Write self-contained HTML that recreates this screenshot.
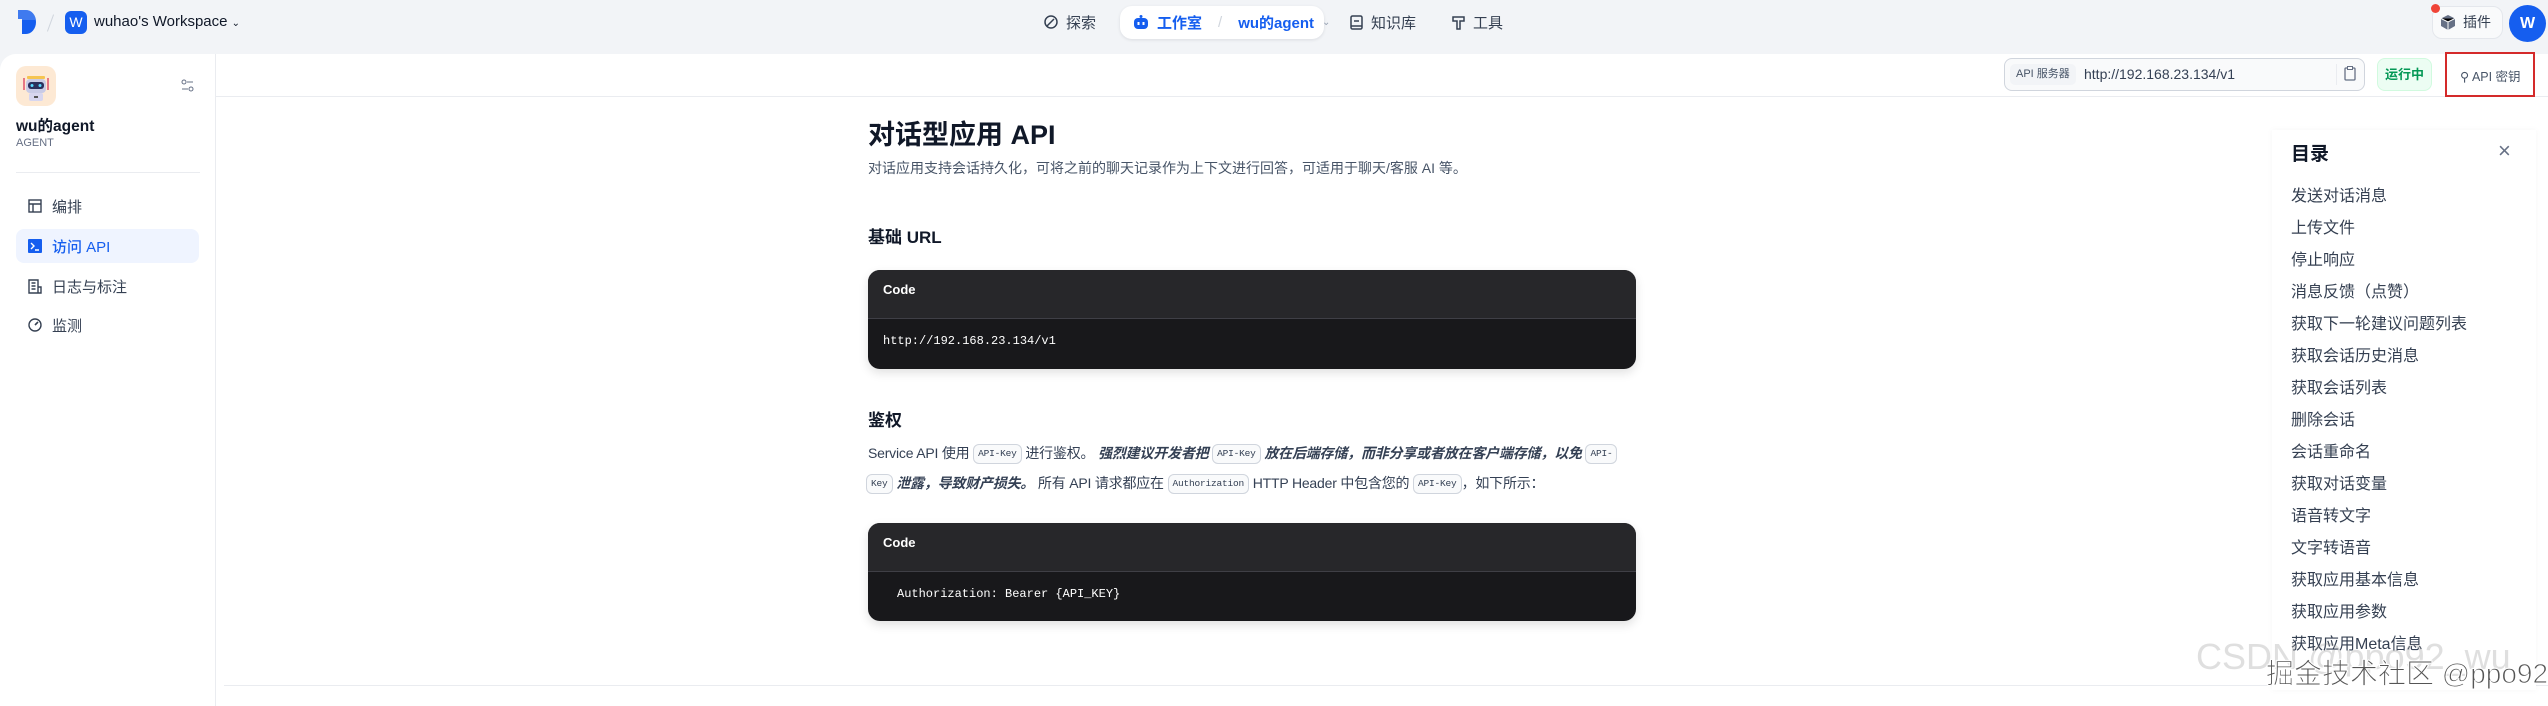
<!DOCTYPE html>
<html><head><meta charset="utf-8">
<style>
*{box-sizing:border-box;margin:0;padding:0}
body{width:2548px;height:706px;overflow:hidden;background:#f2f4f7;font-family:"Liberation Sans","Noto Sans CJK SC",sans-serif;color:#101828;position:relative}
.abs{position:absolute}
.top{position:absolute;left:0;top:0;width:2548px;height:54px}
.navi{position:absolute;top:6px;height:32px;display:flex;align-items:center;font-size:15px;color:#354052;gap:8px}
.panel{position:absolute;left:0;top:54px;width:2548px;height:652px;background:#fff;border-radius:16px 0 0 0}
.side{position:absolute;left:0;top:54px;width:216px;height:652px;border-right:1px solid #eaecf0}
.menu{position:absolute;left:16px;width:183px;height:34px;display:flex;align-items:center;padding-left:12px;gap:10px;font-size:15px;color:#354052;border-radius:8px}
.code{position:absolute;left:868px;width:768px;background:#18181b;border-radius:12px;box-shadow:0 4px 10px rgba(0,0,0,.12);overflow:hidden}
.code .h{height:49px;background:#27272a;border-bottom:1px solid #3f3f46;color:#fff;font-weight:bold;font-size:13px;padding:12px 15px}
.code .b{color:#fff;font-family:"Liberation Mono",monospace;font-size:12px}
.ic{display:inline-block;font-family:"Liberation Mono",monospace;font-size:9.5px;border:1px solid #d0d5dd;border-radius:6px;padding:2px 4px;background:#f9fafb;color:#344054;line-height:14px;vertical-align:middle;font-style:normal;font-weight:normal}
.p{position:absolute;left:868px;font-size:14px;line-height:30px;color:#344054;white-space:nowrap}
.toc{position:absolute;left:2272px;top:130px;width:264px;height:560px;background:#fff;box-shadow:0 0 6px rgba(0,0,0,.04)}
.toc div{position:absolute;left:19px;font-size:16px;color:#354052;white-space:nowrap}
</style></head><body>
<div class="top">
  <svg class="abs" style="left:18px;top:10px" width="18" height="24" viewBox="0 0 18 24"><path d="M0 0h8a10 12 0 0 1 0 24H4V9H0z" fill="#155eef"/><path d="M0 0h8a10 12 0 0 1 10 10H4V9H0z" fill="#5b8def" opacity=".6"/></svg>
  <div class="abs" style="left:50px;top:14px;width:1px;height:18px;background:#d0d5dd;transform:rotate(20deg)"></div>
  <div class="abs" style="left:65px;top:11px;width:22px;height:23px;border-radius:6px;background:#155eef;color:#fff;font-size:14px;text-align:center;line-height:23px">W</div>
  <div class="abs" style="left:94px;top:13px;font-size:15px;color:#101828">wuhao's Workspace <span style="font-size:10px">&#8964;</span></div>
  <div class="navi" style="left:1044px"><svg width="14" height="14" viewBox="0 0 14 14"><circle cx="7" cy="7" r="6" fill="none" stroke="#354052" stroke-width="1.5"/><path d="M3 11L10 4" stroke="#354052" stroke-width="1.5"/></svg>探索</div>
  <div class="abs" style="left:1120px;top:6px;width:204px;height:33px;background:#fff;border-radius:12px;box-shadow:0 1px 3px rgba(16,24,40,.1)"></div>
  <div class="navi" style="left:1133px;color:#155eef;font-weight:bold"><svg width="16" height="14" viewBox="0 0 16 14"><rect x="1" y="3" width="14" height="11" rx="4" fill="#155eef"/><circle cx="8" cy="1.5" r="1.5" fill="#155eef"/><rect x="4.5" y="7" width="2" height="3" fill="#fff"/><rect x="9.5" y="7" width="2" height="3" fill="#fff"/></svg>工作室 <span style="color:#d0d5dd;font-weight:normal;margin:0 8px">/</span> wu的agent <span style="color:#98a2b3;font-size:10px;font-weight:normal">&#8964;</span></div>
  <div class="navi" style="left:1350px"><svg width="13" height="15" viewBox="0 0 13 15"><rect x="1" y="1" width="11" height="13" rx="1.5" fill="none" stroke="#354052" stroke-width="1.5"/><path d="M4 6h5M1 11h11" stroke="#354052" stroke-width="1.5"/></svg>知识库</div>
  <div class="navi" style="left:1452px"><svg width="13" height="15" viewBox="0 0 13 15"><path d="M1 2h11v4H8v8H5V6H1z" fill="none" stroke="#354052" stroke-width="1.5"/></svg>工具</div>
  <div class="abs" style="left:2432px;top:6px;width:71px;height:33px;border:1px solid #e4e7ec;border-radius:10px;background:#f9fafb;font-size:14px;color:#354052;line-height:31px;padding-left:30px">插件</div>
  <svg class="abs" style="left:2441px;top:15px" width="14" height="15" viewBox="0 0 14 15"><path d="M7 0L14 3.5V11L7 15L0 11V3.5z" fill="#667085"/><path d="M0 3.5L7 7L14 3.5M7 7V15" stroke="#fff" stroke-width="1"/></svg>
  <div class="abs" style="left:2431px;top:4px;width:9px;height:9px;border-radius:50%;background:#f04438"></div>
  <div class="abs" style="left:2509px;top:5px;width:37px;height:37px;border-radius:50%;background:#155eef;color:#fff;font-weight:bold;font-size:16px;text-align:center;line-height:37px">W</div>
</div>
<div class="panel"></div>
<div class="side">
  <div class="abs" style="left:16px;top:12px;width:40px;height:40px;border-radius:10px;background:#fde9d4"></div>
  <svg class="abs" style="left:22px;top:18px" width="28" height="30" viewBox="0 0 28 30"><rect x="5" y="4" width="18" height="3" rx="1" fill="#f5c451"/><rect x="4" y="7" width="20" height="14" rx="4" fill="#c9cbe6"/><rect x="6" y="10" width="16" height="7" rx="3" fill="#2b2f5c"/><circle cx="10" cy="13.5" r="1.5" fill="#5ad8ff"/><circle cx="18" cy="13.5" r="1.5" fill="#5ad8ff"/><rect x="7" y="21" width="14" height="8" rx="2" fill="#d7d6ef"/><rect x="12" y="24" width="4" height="2" fill="#555"/><path d="M2 6v12M26 6v12" stroke="#e0536b" stroke-width="1.5"/></svg>
  <svg class="abs" style="left:181px;top:25px" width="13" height="13" viewBox="0 0 13 13"><circle cx="3" cy="3" r="2" fill="none" stroke="#667085"/><path d="M6 3h6M1 10h6" stroke="#667085"/><circle cx="10" cy="10" r="2" fill="none" stroke="#667085"/></svg>
  <div class="abs" style="left:16px;top:60px;font-size:15.5px;font-weight:bold">wu的agent</div>
  <div class="abs" style="left:16px;top:83px;font-size:11px;color:#667085">AGENT</div>
  <div class="abs" style="left:16px;top:118px;width:184px;height:1px;background:#eaecf0"></div>
  <div class="menu" style="top:135px"><svg width="14" height="14" viewBox="0 0 14 14"><rect x="1" y="1" width="12" height="12" fill="none" stroke="#354052" stroke-width="1.4"/><path d="M1 5h12M5 5v8" stroke="#354052" stroke-width="1.4"/></svg>编排</div>
  <div class="menu" style="top:175px;background:#eff4ff;color:#155eef;font-weight:500"><svg width="14" height="14" viewBox="0 0 14 14"><rect width="14" height="14" rx="1" fill="#155eef"/><path d="M3 4l3 3-3 3M7 11h4" stroke="#fff" stroke-width="1.4" fill="none"/></svg>访问 API</div>
  <div class="menu" style="top:215px"><svg width="14" height="15" viewBox="0 0 14 15"><path d="M1 1h9v13H1zM10 8h3v6h-3M3.5 4h4M3.5 7h4M3.5 10h4" fill="none" stroke="#354052" stroke-width="1.4"/></svg>日志与标注</div>
  <div class="menu" style="top:254px"><svg width="14" height="14" viewBox="0 0 14 14"><circle cx="7" cy="7" r="6" fill="none" stroke="#354052" stroke-width="1.4"/><path d="M7 7l3-3" stroke="#354052" stroke-width="1.6"/></svg>监测</div>
</div>
<div class="abs" style="left:216px;top:96px;width:2332px;height:1px;background:#eaecf0"></div>
<div class="abs" style="left:2004px;top:58px;width:361px;height:33px;border:1px solid #d0d5dd;border-radius:8px;background:#f9fafb"></div>
<div class="abs" style="left:2010px;top:64px;height:21px;background:#f2f4f7;border-radius:5px;padding:0 6px;font-size:11px;color:#475467;line-height:21px">API 服务器</div>
<div class="abs" style="left:2084px;top:64px;font-size:14px;color:#344054;line-height:21px">http://192.168.23.134/v1</div>
<div class="abs" style="left:2336px;top:64px;width:1px;height:21px;background:#eaecf0"></div>
<svg class="abs" style="left:2344px;top:66px" width="12" height="15" viewBox="0 0 12 15"><rect x="1" y="2" width="10" height="12" rx="1" fill="none" stroke="#667085" stroke-width="1.3"/><rect x="3.5" y="0.5" width="5" height="3" fill="#fff" stroke="#667085"/></svg>
<div class="abs" style="left:2377px;top:58px;width:55px;height:33px;border-radius:8px;background:#ecfdf3;border:1px solid #d1fadf;color:#039855;font-size:13px;font-weight:bold;text-align:center;line-height:31px">运行中</div>
<div class="abs" style="left:2445px;top:52px;width:90px;height:45px;border:2.5px solid #d42a2a"></div>
<div class="abs" style="left:2460px;top:66px;font-size:12.5px;color:#475467">&#9906; API 密钥</div>

<div class="abs" style="left:868px;top:113px;font-size:27px;font-weight:bold;color:#101828">对话型应用 API</div>
<div class="abs" style="left:868px;top:158px;font-size:14px;color:#475467">对话应用支持会话持久化，可将之前的聊天记录作为上下文进行回答，可适用于聊天/客服 AI 等。</div>
<div class="abs" style="left:868px;top:223px;font-size:17px;font-weight:bold">基础 URL</div>
<div class="code" style="top:270px;height:99px"><div class="h">Code</div><div class="b" style="padding:15px 15px">http://192.168.23.134/v1</div></div>
<div class="abs" style="left:868px;top:406px;font-size:17px;font-weight:bold">鉴权</div>
<div class="p" style="top:438px;letter-spacing:-0.2px">Service API 使用 <span class="ic">API-Key</span> 进行鉴权。 <b><i>强烈建议开发者把 <span class="ic">API-Key</span> 放在后端存储，而非分享或者放在客户端存储，以免 <span class="ic">API-</span></i></b></div>
<div class="p" style="top:468px;left:866px;letter-spacing:-0.2px"><span class="ic">Key</span> <b><i>泄露，导致财产损失。</i></b> 所有 API 请求都应在 <span class="ic">Authorization</span> HTTP Header 中包含您的 <span class="ic">API-Key</span>，如下所示：</div>
<div class="code" style="top:523px;height:98px"><div class="h">Code</div><div class="b" style="padding:15px 29px">Authorization: Bearer {API_KEY}</div></div>
<div class="abs" style="left:224px;top:685px;width:2324px;height:1px;background:#eaecf0"></div>

<div class="toc">
  <div style="top:9px;font-size:19px;font-weight:bold;color:#101828">目录</div>
  <div style="top:8px;left:226px;font-size:22px;color:#667085">×</div>
  <div style="top:52px">发送对话消息</div>
  <div style="top:84px">上传文件</div>
  <div style="top:116px">停止响应</div>
  <div style="top:148px">消息反馈（点赞）</div>
  <div style="top:180px">获取下一轮建议问题列表</div>
  <div style="top:212px">获取会话历史消息</div>
  <div style="top:244px">获取会话列表</div>
  <div style="top:276px">删除会话</div>
  <div style="top:308px">会话重命名</div>
  <div style="top:340px">获取对话变量</div>
  <div style="top:372px">语音转文字</div>
  <div style="top:404px">文字转语音</div>
  <div style="top:436px">获取应用基本信息</div>
  <div style="top:468px">获取应用参数</div>
  <div style="top:500px">获取应用Meta信息</div>
</div>
<div class="abs" style="left:2196px;top:636px;font-size:36px;color:rgba(150,150,150,.3);white-space:nowrap">CSDN @ppo92_wu</div>
<div class="abs" style="left:2266px;top:652px;font-size:28px;color:#555;white-space:nowrap;-webkit-text-stroke:1px #fff;text-shadow:0 0 2px #fff">掘金技术社区 @ppo92</div>
</body></html>
